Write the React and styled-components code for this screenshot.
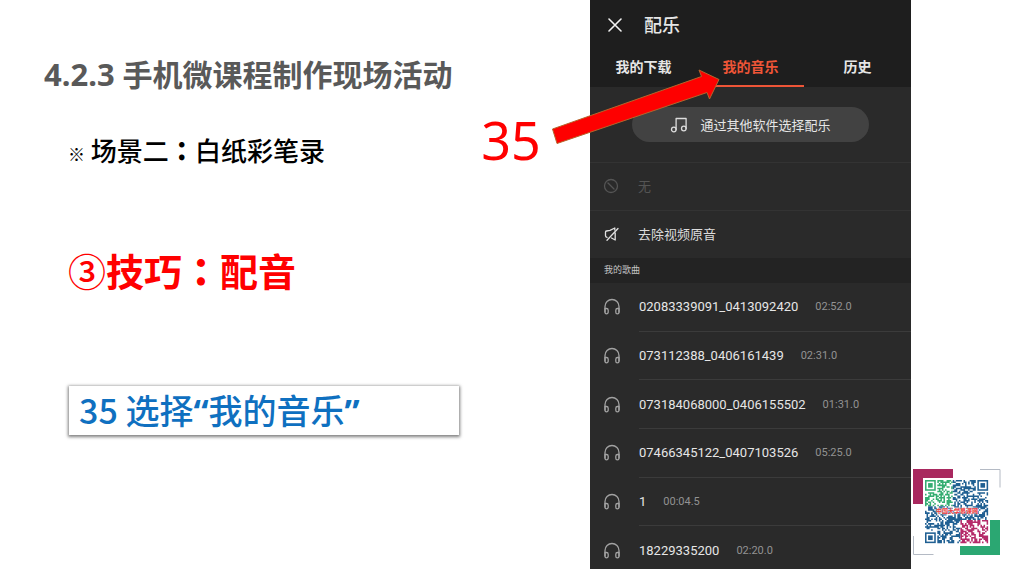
import React from "react";
import styled, { createGlobalStyle } from "styled-components";

const songs = [
    { name: "02083339091_0413092420", time: "02:52.0" },
    { name: "073112388_0406161439", time: "02:31.0" },
    { name: "073184068000_0406155502", time: "01:31.0" },
    { name: "07466345122_0407103526", time: "05:25.0" },
    { name: "1", time: "00:04.5" },
    { name: "18229335200", time: "02:20.0" },
];

const GREEN = "#35ad72";
const BLUE = "#1f5f92";
const PINK = "#b52a69";
const SIZE = 41;

const inFinder = (x, y) => (x < 8 && y < 8) || (x > SIZE - 9 && y < 8) || (x < 8 && y > SIZE - 9);

const moduleColor = (x, y) => {
    if (x < 18 && y < 17) return GREEN;
    if (x > 22 && y > 25) return PINK;
    return BLUE;
};

const buildModules = () => {
    const paths = { [GREEN]: "", [BLUE]: "", [PINK]: "" };
    let seed = 35;
    for (let y = 0; y < SIZE; y++) {
        for (let x = 0; x < SIZE; x++) {
            seed = (seed * 1103515245 + 12345) % 2147483648;
            if (inFinder(x, y) || seed / 2147483648 > 0.56) continue;
            paths[moduleColor(x, y)] += `M${x} ${y}h1v1h-1z`;
        }
    }
    return paths;
};

const modules = buildModules();

const Finder = ({ x, y, color }) => (
    <g fill="none" stroke={color}>
        <rect x={x + 0.5} y={y + 0.5} width="6" height="6" />
        <rect x={x + 2} y={y + 2} width="3" height="3" fill={color} stroke="none" />
    </g>
);

const QrCode = () => (
    <QrBox>
        <QrFrame viewBox="0 0 88 87" aria-hidden="true">
            <path d="M0 0h40v9H10v26H0z" fill="#a9285f" />
            <path d="M77 51h10v35H47v-9h30z" fill="#2ba772" />
            <path d="M67 .5h20v18M.5 67v18.5h20" fill="none" stroke="#b4bac4" />
            <rect x="10" y="9" width="67" height="68" fill="#fff" />
            <g transform="translate(12 11) scale(1.54)">
                {Object.entries(modules).map(([color, d]) => <path key={color} d={d} fill={color} />)}
                <Finder x={0} y={0} color={GREEN} />
                <Finder x={34} y={0} color={BLUE} />
                <Finder x={0} y={34} color={BLUE} />
            </g>
        </QrFrame>
        <QrLabel>中国大学慕课网</QrLabel>
    </QrBox>
);

const Headphones = () => (
    <Icon $size={18} viewBox="0 0 18 18" $color="#a2a2a2">
        <path d="M2 14V8.5a7 7 0 0 1 14 0V14" />
        <path d="M2 10.5h1.4a1.8 1.8 0 0 1 1.8 1.8v1.9a1.6 1.6 0 0 1-3.2 0zM16 10.5h-1.4a1.8 1.8 0 0 0-1.8 1.8v1.9a1.6 1.6 0 0 0 3.2 0z" />
    </Icon>
);

const App = () => {
    return <Slide>
        <GlobalStyle />
        <Lesson>
            <Title><TitleNumber>4.2.3</TitleNumber> 手机微课程制作现场活动</Title>
            <Scene><Mark>※</Mark> 场景二<Colon>：</Colon>白纸彩笔录</Scene>
            <Skill><Circled>③</Circled>技巧<Colon>：</Colon>配音</Skill>
            <Step>35 选择<Quote>“</Quote>我的音乐<Quote>”</Quote></Step>
        </Lesson>
        <Phone>
            <Header>
                <CloseButton aria-label="关闭">
                    <Icon $size={14} viewBox="0 0 14 14" $color="#f2f2f2">
                        <path d="M1 1l12 12M13 1L1 13" strokeWidth="1.6" />
                    </Icon>
                </CloseButton>
                <Heading>配乐</Heading>
            </Header>
            <Tabs>
                <Tab>我的下载</Tab>
                <Tab $active>我的音乐</Tab>
                <Tab>历史</Tab>
            </Tabs>
            <Picker>
                <PickButton>
                    <Icon $size={18} viewBox="0 0 18 18" $color="#dcdcdc">
                        <circle cx="3.8" cy="13.5" r="2.3" />
                        <circle cx="13.8" cy="12.5" r="2.3" />
                        <path d="M6.1 13.5V2.5h10v10" />
                    </Icon>
                    通过其他软件选择配乐
                </PickButton>
            </Picker>
            <Option $disabled>
                <Icon $size={16} viewBox="0 0 16 16" $color="#555">
                    <circle cx="8" cy="8" r="6.5" />
                    <path d="M5 5l6 6" />
                </Icon>
                无
            </Option>
            <Option>
                <Icon $size={16} viewBox="0 0 16 16" $color="#e0e0e0">
                    <path d="M11.8 4V2L7 4.3 3.5 5Q2.5 5.2 2.5 6.2v3.6Q2.5 11 4 11.3" />
                    <path d="M15 2.5L4 14.3M8.5 12l3.7 2V7" />
                </Icon>
                去除视频原音
            </Option>
            <Section>我的歌曲</Section>
            <SongList>
                {songs.map((song) => (
                    <Song key={song.name}>
                        <Headphones />
                        <SongInfo>
                            <span>{song.name}</span>
                            <Time>{song.time}</Time>
                        </SongInfo>
                    </Song>
                ))}
            </SongList>
        </Phone>
        <Side>
            <QrCode />
        </Side>
        <Pointer>
            <PointerLabel>35</PointerLabel>
            <Arrow viewBox="0 0 170 78" aria-hidden="true">
                <path d="M2.5 61L151.5 8.5 149 2l20 9.5L159.5 31l-2.5-6.5L7 75.5z" fill="#fe0000" stroke="#b5652c" />
            </Arrow>
        </Pointer>
    </Slide>;
}

const GlobalStyle = createGlobalStyle`
    * {
        box-sizing: border-box;
    }

    body {
        margin: 0;
        background-color: #fff;
        font-family: "Noto Sans", "Noto Sans CJK SC", sans-serif;
    }

    button {
        border: none;
        padding: 0;
        background: none;
        color: inherit;
        font: inherit;
        cursor: pointer;
    }

    h1, h2, p, ul {
        margin: 0;
        padding: 0;
    }
`;

const Slide = styled.main`
    position: relative;
    display: grid;
    grid-template-columns: 590fr 321fr 113fr;
    height: 100vh;
    min-height: 480px;
    padding-bottom: 7px;
    overflow: hidden;
`;

const Lesson = styled.section`
    display: flex;
    flex-direction: column;
    align-items: flex-start;
    padding: 52px 0 0 44px;
`;

const Title = styled.h1`
    color: #595959;
    font-size: 30px;
    line-height: 44px;
    white-space: nowrap;
`;

const TitleNumber = styled.span`
    font-size: 31px;
`;

const Scene = styled.p`
    margin: 33px 0 0 24px;
    font-size: 26px;
    line-height: 40px;
    font-weight: 500;
    font-family: "Noto Sans CJK SC", sans-serif;
    color: #000;
`;

const Mark = styled.span`
    font-size: 17px;
    font-weight: 700;
`;

/* the traditional face centres its colon in the square */
const Colon = styled.span`
    font-family: "Noto Sans CJK TC", sans-serif;
    font-weight: 900;
`;

const Skill = styled.h2`
    margin: 68px 0 0 24px;
    color: #f00;
    font-size: 38px;
    line-height: 56px;
    font-family: "Noto Sans CJK SC", sans-serif;
`;

const Circled = styled.span`
    font-weight: 500;
`;

const Step = styled.p`
    width: 390px;
    margin: 88px 0 0 25px;
    padding: 0 10px;
    color: #0f70c0;
    background-color: #fff;
    font-size: 34px;
    line-height: 48px;
    font-weight: 500;
    font-family: "Noto Sans CJK SC", sans-serif;
    box-shadow: 0 1px 3px 1px rgba(0, 0, 0, 0.5);
`;

const Quote = styled.span`
    font-family: "Noto Sans", sans-serif;
    font-weight: 700;
`;

const Phone = styled.section`
    display: flex;
    flex-direction: column;
    overflow: hidden;
    color: #e6e6e6;
    background-color: #2a2a2a;
    font-family: Roboto, "Noto Sans CJK SC", sans-serif;
`;

const Header = styled.header`
    display: flex;
    flex: none;
    align-items: center;
    gap: 22px;
    height: 49px;
    padding-left: 18px;
    background-color: #1e1e1e;
`;

const CloseButton = styled.button`
    display: flex;
`;

const Heading = styled.h2`
    padding-bottom: 2px;
    font-size: 18px;
    font-weight: 500;
`;

const Tabs = styled.nav`
    display: grid;
    flex: none;
    grid-template-columns: 1fr 1fr 1fr;
    height: 38px;
    background-color: #1e1e1e;
`;

const Tab = styled.button`
    display: flex;
    align-items: center;
    justify-content: center;
    padding-bottom: 2px;
    border-bottom: 2px solid ${({ $active }) => ($active ? "#ee5537" : "transparent")};
    color: ${({ $active }) => ($active ? "#ee5537" : "#e6e6e6")};
    font-size: 14px;
    font-weight: 700;
`;

const Picker = styled.div`
    display: flex;
    flex: none;
    justify-content: center;
    align-items: center;
    height: 75px;
`;

const PickButton = styled.button`
    display: flex;
    align-items: center;
    justify-content: center;
    gap: 12px;
    width: 74%;
    height: 35px;
    border-radius: 18px;
    background-color: #424242;
    font-size: 13px;
`;

const Option = styled.button`
    display: flex;
    flex: none;
    align-items: center;
    gap: 19px;
    height: 48px;
    padding: 0 0 2px 13px;
    border-top: 1px solid #333;
    color: ${({ $disabled }) => ($disabled ? "#555" : "#dcdcdc")};
    font-size: 13px;
    text-align: left;
`;

const Section = styled.h2`
    flex: none;
    padding-left: 14px;
    background-color: #232323;
    color: #c4c4c4;
    font-size: 9px;
    line-height: 25px;
    font-weight: 400;
`;

const SongList = styled.ul`
    display: grid;
    flex: none;
    grid-template-rows: repeat(6, 1fr);
    height: 292px;
    list-style: none;
`;

const Song = styled.li`
    display: flex;
    align-items: center;
    gap: 18px;
    padding-left: 13px;
`;

const SongInfo = styled.div`
    display: flex;
    flex: 1;
    align-items: center;
    align-self: stretch;
    gap: 17px;
    border-bottom: 1px solid #3b3b3b;
    font-size: 13px;
`;

const Time = styled.time`
    color: #929292;
    font-size: 11px;
`;

const Icon = styled.svg`
    flex: none;
    width: ${({ $size }) => $size}px;
    height: ${({ $size }) => $size}px;
    fill: none;
    stroke: ${({ $color }) => $color};
    stroke-width: 1.3;
    stroke-linecap: round;
    stroke-linejoin: round;
`;

const Side = styled.aside`
    display: flex;
    flex-direction: column;
    justify-content: flex-end;
    padding: 0 0 13px 2px;
`;

const QrBox = styled.div`
    position: relative;
    width: 88px;
`;

const QrFrame = styled.svg`
    display: block;
    width: 100%;
`;

const QrLabel = styled.span`
    position: absolute;
    top: 37px;
    left: 0;
    width: 100%;
    color: #f0393b;
    font-size: 6px;
    line-height: 10px;
    font-weight: 700;
    text-align: center;
    text-shadow: 0 0 2px #fff, 0 0 2px #fff;
`;

/* lies over both the lesson and the phone */
const Pointer = styled.div`
    position: absolute;
    top: 68px;
    left: 47%;
    display: flex;
    align-items: flex-start;
    gap: 9px;
`;

const PointerLabel = styled.strong`
    padding-top: 36px;
    color: #f00;
    font-size: 52px;
    line-height: 72px;
    font-weight: 400;
`;

const Arrow = styled.svg`
    width: 170px;
    height: 78px;
`;

export default App;
